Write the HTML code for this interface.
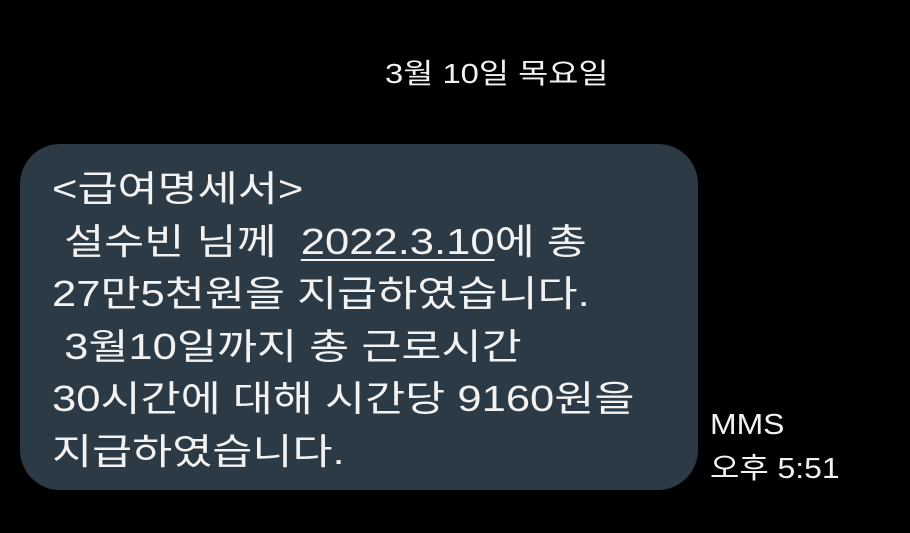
<html><head><style>
body{margin:0;width:910px;height:533px;background:#000;overflow:hidden;font-family:"Liberation Sans","Noto Sans CJK KR",sans-serif;color:#f2f2f2;position:relative}
.d{position:absolute;left:385px;top:52px;font-size:28px;white-space:nowrap;transform:scaleX(1.17);transform-origin:left top}
.b{position:absolute;left:20px;top:144px;width:678px;height:346px;background:#2c3a45;border-radius:40px}
.t{position:absolute;left:52px;top:163px;font-size:36px;line-height:52.5px;white-space:pre;transform:scaleX(1.21);transform-origin:left top}
.m{position:absolute;left:710px;top:403px;font-size:29px;line-height:44px;white-space:pre;transform:scaleX(1.1);transform-origin:left top}
u{text-decoration-thickness:2px;text-underline-offset:5px}
</style></head><body>
<div class="d">3월 10일 목요일</div>
<div class="b"></div>
<div class="t">&lt;급여명세서&gt;
 설수빈 님께  <u>2022.3.10</u>에 총
27만5천원을 지급하였습니다.
 3월10일까지 총 근로시간
30시간에 대해 시간당 9160원을
지급하였습니다.</div>
<div class="m">MMS
오후 5:51</div>
</body></html>
